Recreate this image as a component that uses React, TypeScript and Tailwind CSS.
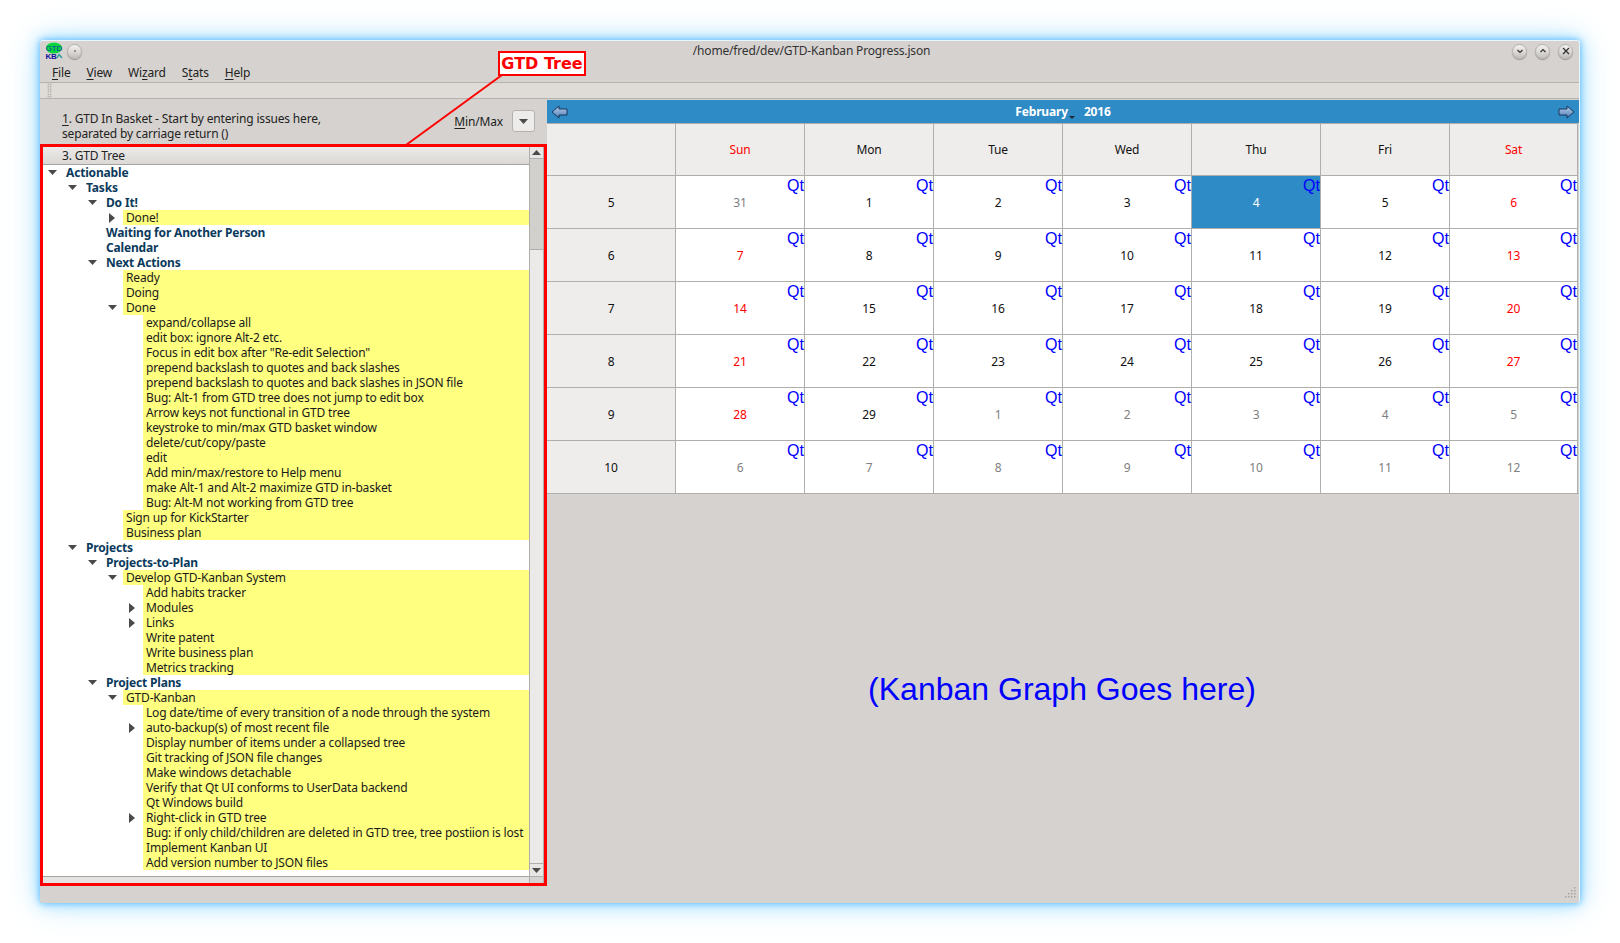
import React from "react";

type Row = { level: number; text: string; head?: boolean; arrow?: "down" | "right" };

const treeRows: Row[] = [
    { level: 0, text: "Actionable", head: true, arrow: "down" },
    { level: 1, text: "Tasks", head: true, arrow: "down" },
    { level: 2, text: "Do It!", head: true, arrow: "down" },
    { level: 3, text: "Done!", arrow: "right" },
    { level: 2, text: "Waiting for Another Person", head: true },
    { level: 2, text: "Calendar", head: true },
    { level: 2, text: "Next Actions", head: true, arrow: "down" },
    { level: 3, text: "Ready" },
    { level: 3, text: "Doing" },
    { level: 3, text: "Done", arrow: "down" },
    { level: 4, text: "expand/collapse all" },
    { level: 4, text: "edit box: ignore Alt-2 etc." },
    { level: 4, text: 'Focus in edit box after "Re-edit Selection"' },
    { level: 4, text: "prepend backslash to quotes and back slashes" },
    { level: 4, text: "prepend backslash to quotes and back slashes in JSON file" },
    { level: 4, text: "Bug: Alt-1 from GTD tree does not jump to edit box" },
    { level: 4, text: "Arrow keys not functional in GTD tree" },
    { level: 4, text: "keystroke to min/max GTD basket window" },
    { level: 4, text: "delete/cut/copy/paste" },
    { level: 4, text: "edit" },
    { level: 4, text: "Add min/max/restore to Help menu" },
    { level: 4, text: "make Alt-1 and Alt-2 maximize GTD in-basket" },
    { level: 4, text: "Bug: Alt-M not working from GTD tree" },
    { level: 3, text: "Sign up for KickStarter" },
    { level: 3, text: "Business plan" },
    { level: 1, text: "Projects", head: true, arrow: "down" },
    { level: 2, text: "Projects-to-Plan", head: true, arrow: "down" },
    { level: 3, text: "Develop GTD-Kanban System", arrow: "down" },
    { level: 4, text: "Add habits tracker" },
    { level: 4, text: "Modules", arrow: "right" },
    { level: 4, text: "Links", arrow: "right" },
    { level: 4, text: "Write patent" },
    { level: 4, text: "Write business plan" },
    { level: 4, text: "Metrics tracking" },
    { level: 2, text: "Project Plans", head: true, arrow: "down" },
    { level: 3, text: "GTD-Kanban", arrow: "down" },
    { level: 4, text: "Log date/time of every transition of a node through the system" },
    { level: 4, text: "auto-backup(s) of most recent file", arrow: "right" },
    { level: 4, text: "Display number of items under a collapsed tree" },
    { level: 4, text: "Git tracking of JSON file changes" },
    { level: 4, text: "Make windows detachable" },
    { level: 4, text: "Verify that Qt UI conforms to UserData backend" },
    { level: 4, text: "Qt Windows build" },
    { level: 4, text: "Right-click in GTD tree", arrow: "right" },
    { level: 4, text: "Bug: if only child/children are deleted in GTD tree, tree postiion is lost" },
    { level: 4, text: "Implement Kanban UI" },
    { level: 4, text: "Add version number to JSON files" },
];

const indents = ["w-[20px]", "w-[40px]", "w-[60px]", "w-[80px]", "w-[100px]"];

const days = ["Sun", "Mon", "Tue", "Wed", "Thu", "Fri", "Sat"];

const weeks: { week: number; dates: [number, boolean][] }[] = [
    { week: 5, dates: [[31, false], [1, true], [2, true], [3, true], [4, true], [5, true], [6, true]] },
    { week: 6, dates: [[7, true], [8, true], [9, true], [10, true], [11, true], [12, true], [13, true]] },
    { week: 7, dates: [[14, true], [15, true], [16, true], [17, true], [18, true], [19, true], [20, true]] },
    { week: 8, dates: [[21, true], [22, true], [23, true], [24, true], [25, true], [26, true], [27, true]] },
    { week: 9, dates: [[28, true], [29, true], [1, false], [2, false], [3, false], [4, false], [5, false]] },
    { week: 10, dates: [[6, false], [7, false], [8, false], [9, false], [10, false], [11, false], [12, false]] },
];

function Mnemonic({ before, letter, after }: { before?: string; letter: string; after?: string }) {
    return (
        <span>
            {before}
            <span className="underline underline-offset-2">{letter}</span>
            {after}
        </span>
    );
}

function WinButton({ children }: { children?: React.ReactNode }) {
    return (
        <div className="flex h-[15px] w-[15px] items-center justify-center rounded-full border border-[#b5b1ad] bg-gradient-to-b from-[#f4f3f2] to-[#c4c0bc] shadow-[0_1px_1px_rgba(0,0,0,0.3)]">
            {children}
        </div>
    );
}

function Logo() {
    return (
        <svg width="18" height="18" viewBox="0 0 18 18" className="shrink-0">
            <ellipse cx="9" cy="6" rx="8" ry="5.5" fill="#08d63c" />
            <text x="9" y="9" textAnchor="middle" fontSize="8" fontFamily="Liberation Sans, sans-serif" fill="#0a3aa8">
                GTD
            </text>
            <text x="6" y="17" textAnchor="middle" fontSize="8" fontWeight="bold" fontFamily="Liberation Sans, sans-serif" fill="#10109a">
                KB
            </text>
            <path d="M12 16 L14 12.5 L17 16" stroke="#2aa098" strokeWidth="1.5" fill="none" />
        </svg>
    );
}

function CalArrow({ flip }: { flip?: boolean }) {
    return (
        <svg width="17" height="14" viewBox="0 0 17 14" className={flip ? "-scale-x-100" : ""}>
            <defs>
                <linearGradient id={flip ? "arrowR" : "arrowL"} x1="0" y1="0" x2="0" y2="1">
                    <stop offset="0" stopColor="#b9cfe8" />
                    <stop offset="1" stopColor="#4f7fb8" />
                </linearGradient>
            </defs>
            <path
                d="M1 7 L8 1 L8 4 L16 4 L16 10 L8 10 L8 13 Z"
                fill={flip ? "url(#arrowR)" : "url(#arrowL)"}
                stroke="#17365f"
                strokeWidth="1"
                strokeLinejoin="round"
            />
        </svg>
    );
}

function Triangle({ dir }: { dir: "up" | "down" | "right" }) {
    if (dir === "right") {
        return (
            <svg width="6" height="10" viewBox="0 0 6 10">
                <path d="M0 0 L6 5 L0 10 Z" fill="#4a4a4a" />
            </svg>
        );
    }
    return (
        <svg width="9" height="5" viewBox="0 0 9 5">
            <path d={dir === "down" ? "M0 0 L9 0 L4.5 5 Z" : "M0 5 L9 5 L4.5 0 Z"} fill="#4a4a4a" />
        </svg>
    );
}

function SizeGrip() {
    const dots = [
        [9, 0], [6, 3], [9, 3], [3, 6], [6, 6], [9, 6], [0, 9], [3, 9], [6, 9], [9, 9],
    ];
    return (
        <svg width="11" height="11" viewBox="0 0 11 11" className="absolute bottom-[5px] right-[3px]">
            {dots.map(([x, y], i) => (
                <rect key={i} x={x} y={y} width="1.5" height="1.5" fill="#a8a4a0" />
            ))}
        </svg>
    );
}

function TreeRow({ row }: { row: Row }) {
    return (
        <div className="flex h-[15px] items-center">
            <div className={`flex h-full shrink-0 items-center justify-end ${indents[row.level]}`}>
                {row.arrow && (
                    <span className="flex w-[20px] justify-center pr-[2px]">
                        <Triangle dir={row.arrow} />
                    </span>
                )}
            </div>
            <div
                className={
                    row.head
                        ? "flex h-full flex-1 items-center pl-[3px] font-bold text-[#0b3a5c]"
                        : "flex h-full flex-1 items-center bg-[#ffff80] pl-[3px] text-[#1a1a1a]"
                }
            >
                <span className="whitespace-nowrap">{row.text}</span>
            </div>
        </div>
    );
}

function GtdTree() {
    return (
        <div className="flex h-[742px] border-[3px] border-[#ff0000] bg-white">
            <div className="flex min-w-0 flex-1 flex-col">
                <div className="flex h-[18px] items-center border-b border-[#a5a3a0] bg-gradient-to-b from-[#ecebe9] to-[#dbd8d5] pl-[19px] text-[#222]">
                    3. GTD Tree
                </div>
                <div className="flex-1 overflow-hidden">
                    {treeRows.map((row, i) => (
                        <TreeRow key={i} row={row} />
                    ))}
                </div>
                <div className="h-[7px] border-t border-[#a5a3a0] bg-[#e6e4e2]" />
            </div>
            <div className="flex w-[15px] flex-col border-x border-[#b0aeac] bg-[#eceae8]">
                <div className="flex h-[12px] items-center justify-center border-b border-[#b0aeac] bg-[#e8e6e4]">
                    <Triangle dir="up" />
                </div>
                <div className="h-[91px] border-b border-[#b0aeac] bg-[#d2d0cd]" />
                <div className="flex-1" />
                <div className="flex h-[14px] items-center justify-center border-y border-[#b0aeac] bg-[#e8e6e4]">
                    <Triangle dir="down" />
                </div>
                <div className="h-[6px] bg-[#d6d2cf]" />
            </div>
        </div>
    );
}

function Calendar() {
    return (
        <div className="flex flex-col">
            <div className="relative flex h-[23px] items-center justify-between bg-[#2e8bc6] px-[4px]">
                <CalArrow />
                <div className="flex items-center font-bold text-white">
                    <span>February</span>
                    <span className="relative top-[6px] ml-[1px] h-0 w-0 border-x-[3px] border-t-[3px] border-x-transparent border-t-[#1a2a3a]" />
                    <span className="ml-[9px]">2016</span>
                </div>
                <CalArrow flip />
            </div>
            <div className="grid grid-cols-[repeat(7,129px)_128px] grid-rows-[52px_repeat(6,53px)] border-b border-[#b0aeac]">
                <div className="border-r border-t border-[#b0aeac] bg-[#eeedeb]" />
                {days.map((d, i) => (
                    <div
                        key={d}
                        className={`flex items-center justify-center border-r border-t border-[#b0aeac] bg-[#eeedeb] ${
                            i === 0 || i === 6 ? "text-[#ff0000]" : "text-[#111]"
                        }`}
                    >
                        {d}
                    </div>
                ))}
                {weeks.map((w) => (
                    <React.Fragment key={w.week}>
                        <div className="flex items-center justify-center border-r border-t border-[#b0aeac] bg-[#eeedeb] text-[#111]">
                            {w.week}
                        </div>
                        {w.dates.map(([n, current], i) => {
                            const today = w.week === 5 && n === 4;
                            const weekend = i === 0 || i === 6;
                            const color = today
                                ? "text-white"
                                : !current
                                  ? "text-[#808080]"
                                  : weekend
                                    ? "text-[#ff0000]"
                                    : "text-[#111]";
                            return (
                                <div
                                    key={i}
                                    className={`relative flex items-center justify-center border-r border-t border-[#b0aeac] ${
                                        today ? "bg-[#2e8bc6]" : "bg-white"
                                    } ${color}`}
                                >
                                    <span className="absolute right-0 top-0 font-['Liberation_Sans',sans-serif] text-[16px] leading-[19px] tracking-normal text-[#0000ff]">
                                        Qt
                                    </span>
                                    {n}
                                </div>
                            );
                        })}
                    </React.Fragment>
                ))}
            </div>
        </div>
    );
}

export default function App() {
    return (
        <div className="relative h-[943px] w-[1620px] overflow-hidden bg-white pl-[40px] pt-[40px] font-['Noto_Sans',sans-serif] text-[12px] leading-[15px] tracking-[-0.17px]">
            <div className="relative flex h-[863px] w-[1540px] flex-col rounded-[3px] border-r border-t border-[#e8f6ff] bg-[#d6d2cf] shadow-[0_0_6px_#5cbcff,0_0_16px_#8fd8ff,0_0_36px_#c4e8ff]">
                <div className="relative flex h-[20px] items-center justify-between px-[5px]">
                    <div className="flex items-center gap-[4px]">
                        <Logo />
                        <WinButton>
                            <span className="h-[2px] w-[2px] rounded-full bg-[#777]" />
                        </WinButton>
                    </div>
                    <div className="absolute inset-x-0 top-[2px] pl-[4px] text-center text-[#333]">
                        /home/fred/dev/GTD-Kanban Progress.json
                    </div>
                    <div className="flex items-center gap-[8px] pr-[1px]">
                        <WinButton>
                            <svg width="8" height="8" viewBox="0 0 8 8">
                                <path d="M1.5 3 L4 5.5 L6.5 3" fill="none" stroke="#333" strokeWidth="1.2" />
                            </svg>
                        </WinButton>
                        <WinButton>
                            <svg width="8" height="8" viewBox="0 0 8 8">
                                <path d="M1.5 5 L4 2.5 L6.5 5" fill="none" stroke="#333" strokeWidth="1.2" />
                            </svg>
                        </WinButton>
                        <WinButton>
                            <svg width="8" height="8" viewBox="0 0 8 8">
                                <path d="M1 1 L7 7 M7 1 L1 7" fill="none" stroke="#333" strokeWidth="1.3" />
                            </svg>
                        </WinButton>
                    </div>
                </div>
                <div className="flex h-[21px] items-center gap-[16px] pl-[12px] pt-[2px] text-[#222]">
                    <Mnemonic letter="F" after="ile" />
                    <Mnemonic letter="V" after="iew" />
                    <Mnemonic before="Wi" letter="z" after="ard" />
                    <Mnemonic before="S" letter="t" after="ats" />
                    <Mnemonic letter="H" after="elp" />
                </div>
                <div className="flex h-[17px] items-center border-y border-[#b5b2af] bg-[#dfdbd7] pl-[7px]">
                    <div className="h-[15px] w-[5px] bg-[radial-gradient(circle,#a09c98_0.7px,transparent_0.9px)] bg-[length:2.5px_2.5px]" />
                </div>
                <div className="flex min-h-0 flex-1 pt-[1px]">
                    <div className="w-[507px] shrink-0">
                        <div className="flex h-[44px] items-start justify-between pr-[12px] pl-[22px] pt-[11px] text-[#222]">
                            <div>
                                <div>
                                    <Mnemonic letter="1" after=". GTD In Basket - Start by entering issues here," />
                                </div>
                                <div>separated by carriage return ()</div>
                            </div>
                            <div className="-mt-[1px] flex items-center gap-[9px]">
                                <Mnemonic letter="M" after="in/Max" />
                                <div className="flex h-[22px] w-[23px] items-center justify-center rounded-[3px] border border-[#b5b1ad] bg-[#eeecea]">
                                    <Triangle dir="down" />
                                </div>
                            </div>
                        </div>
                        <GtdTree />
                    </div>
                    <div className="flex flex-1 flex-col">
                        <Calendar />
                        <div className="flex flex-1 items-center justify-center pb-[20px] pr-[2px] font-['Liberation_Sans',sans-serif] text-[32px] leading-[38px] tracking-normal text-[#0000ff]">
                            (Kanban Graph Goes here)
                        </div>
                    </div>
                </div>
                <SizeGrip />
            </div>
            {/* callout over the window */}
            <svg className="pointer-events-none absolute left-0 top-0" width="600" height="160">
                <path d="M502 75 L406 145" stroke="#ff0000" strokeWidth="2" fill="none" />
            </svg>
            <div className="absolute left-[498px] top-[51px] flex h-[25px] w-[88px] items-center justify-center border-2 border-[#ff0000] bg-white font-['DejaVu_Sans',sans-serif] text-[16px] font-bold tracking-normal text-[#ff0000]">
                GTD Tree
            </div>
        </div>
    );
}
